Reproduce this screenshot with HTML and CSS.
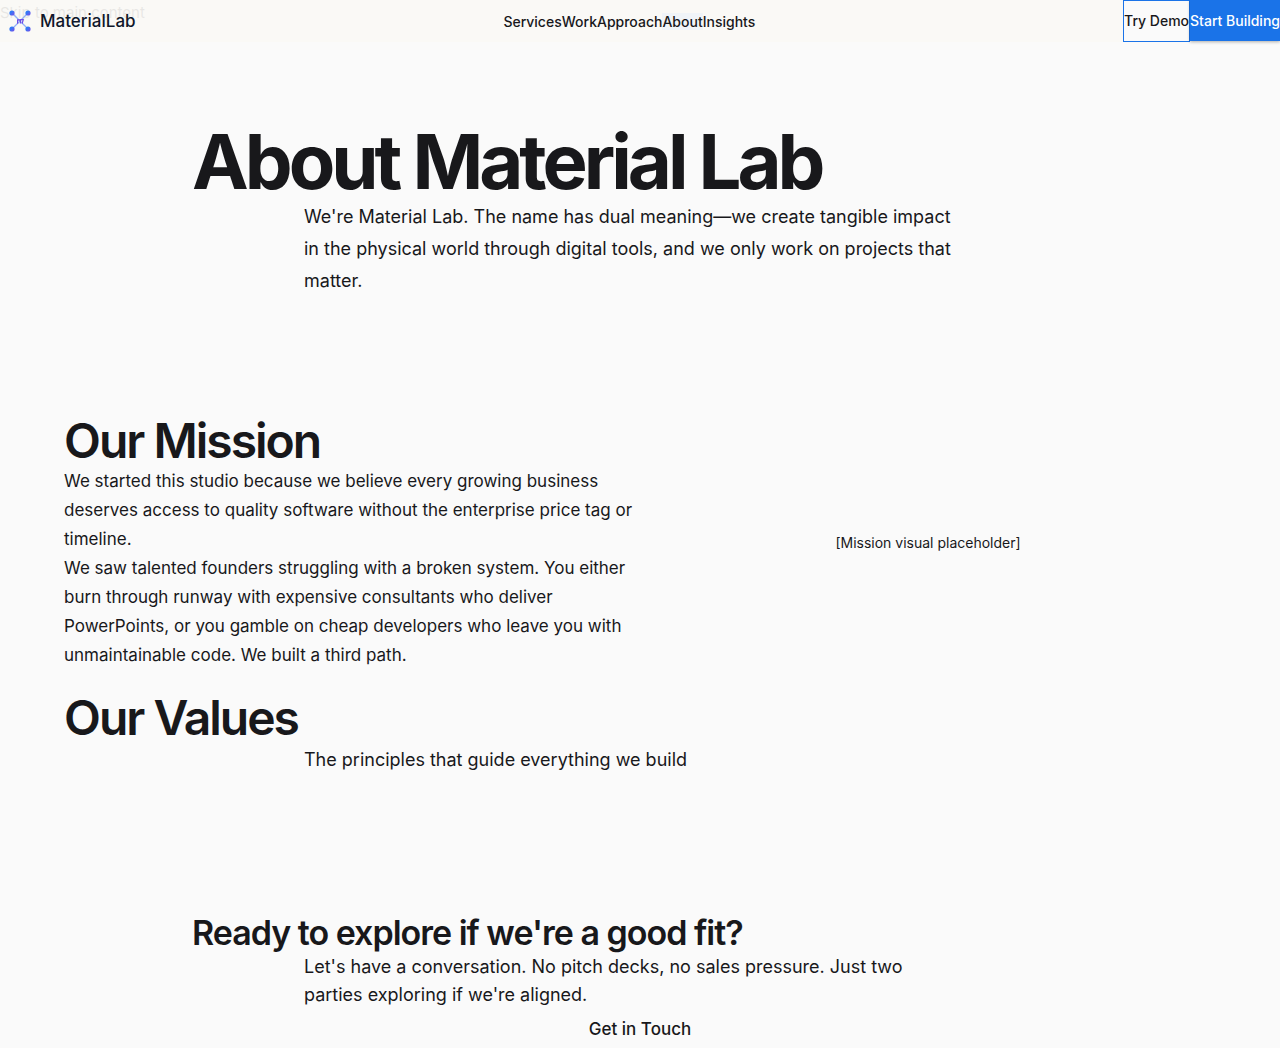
FILE: index.html
```html
<!DOCTYPE html>
<html lang="en">
<head>
<meta charset="utf-8">
<meta name="viewport" content="width=device-width, initial-scale=1">
<title>About | MaterialLab</title>
<link rel="stylesheet" href="styles.css">
</head>
<body>
<a class="skip-link" href="#main">Skip to main content</a>
<header class="site-header">
  <a class="brand" href="#">
    <svg class="brand-mark" viewBox="0 0 32 32" aria-hidden="true">
      <defs>
        <linearGradient id="mark" x1="0" y1="0" x2="1" y2="1">
          <stop offset="0.3" stop-color="#2f7bf6"/>
          <stop offset="1" stop-color="#7c4be8"/>
        </linearGradient>
      </defs>
      <path d="M8 8l16 16M24 8L8 24" stroke="#8fb0f8" stroke-width="1.2"/>
      <path d="M13.6 18.8v-4h2.8v3.6M16.4 14.6h2.8l-1 4" fill="none" stroke="#6d4be8" stroke-width="1.2"/>
      <g fill="url(#mark)">
        <circle cx="8" cy="8" r="2.6"/>
        <circle cx="24" cy="8" r="2.6"/>
        <circle cx="8" cy="24" r="2.6"/>
        <circle cx="24" cy="24" r="2.6"/>
      </g>
    </svg>
    <span class="brand-name">MaterialLab</span>
  </a>
  <nav class="nav" aria-label="Main">
    <a href="#">Services</a><a href="#">Work</a><a href="#">Approach</a><a class="active" href="#" aria-current="page">About</a><a href="#">Insights</a>
  </nav>
  <div class="actions">
    <button class="btn btn-outline" type="button">Try Demo</button>
    <button class="btn btn-solid" type="button">Start Building</button>
  </div>
</header>
<main id="main">
  <section class="hero narrow">
    <h1>About Material Lab</h1>
    <p class="lead">We're Material Lab. The name has dual meaning—we create tangible impact in the physical world through digital tools, and we only work on projects that matter.</p>
  </section>
  <section class="mission wide">
    <div>
      <h2>Our Mission</h2>
      <p>We started this studio because we believe every growing business deserves access to quality software without the enterprise price tag or timeline.</p>
      <p>We saw talented founders struggling with a broken system. You either burn through runway with expensive consultants who deliver PowerPoints, or you gamble on cheap developers who leave you with unmaintainable code. We built a third path.</p>
    </div>
    <div class="visual">[Mission visual placeholder]</div>
  </section>
  <section class="values wide">
    <h2>Our Values</h2>
    <p class="lead">The principles that guide everything we build</p>
  </section>
  <section class="cta narrow">
    <h2>Ready to explore if we're a good fit?</h2>
    <p class="lead">Let's have a conversation. No pitch decks, no sales pressure. Just two parties exploring if we're aligned.</p>
    <a class="touch" href="#">Get in Touch</a>
  </section>
</main>
</body>
</html>
```

FILE: styles.css
```css
* { box-sizing: border-box; margin: 0; padding: 0; }

body {
  background: #fafafa;
  color: #18181b;
  font-family: Inter, "Liberation Sans", sans-serif;
  font-size: 14px;
  line-height: 24px;
}

a { color: inherit; text-decoration: none; }

.skip-link {
  position: absolute;
  top: 0;
  left: 0;
  font-size: 15px;
  line-height: 26px;
}

.site-header {
  position: relative;
  display: flex;
  justify-content: space-between;
  align-items: center;
  height: 42px;
  background: rgba(250, 249, 245, 0.92);
}

.brand { display: flex; align-items: center; padding-left: 4px; gap: 4px; }
.brand-mark { width: 32px; height: 32px; }
.brand-name { font-size: 17px; font-weight: 500; line-height: 26px; color: #0f172a; }

.nav { display: flex; font-weight: 500; line-height: 17px; }
.nav .active { background: #f0f4f8; }

.actions { display: flex; }
.btn {
  height: 42px;
  border: 1px solid #1a73e8;
  font: inherit;
  font-weight: 500;
  white-space: nowrap;
}
.btn-outline { background: #fafafa; color: #18181b; }
.btn-solid {
  height: 41px;
  border-width: 0;
  background: #1a73e8;
  color: #fff;
  box-shadow: 0 1px 3px rgba(0, 0, 0, 0.3);
}

.narrow { max-width: 896px; margin: 0 auto; }
.wide { max-width: 1152px; margin: 0 auto; }

.lead {
  max-width: 672px;
  margin: 0 auto;
  padding-right: 16px;
  font-size: 18px;
  line-height: 32px;
}

.hero { padding: 79px 0 118px; }
h1 { font-size: 76px; line-height: 80px; font-weight: 700; letter-spacing: -4px; }
h2 { font-size: 48px; line-height: 52px; font-weight: 600; letter-spacing: -2px; }

.mission {
  display: grid;
  grid-template-columns: 1fr 1fr;
  font-size: 17px;
  line-height: 29px;
}
.visual {
  display: flex;
  align-items: center;
  justify-content: center;
  font-size: 14px;
}

.values { padding: 22px 0 137px; }

.cta h2 { font-size: 34px; line-height: 40px; letter-spacing: -1px; }
.cta .lead { line-height: 28px; }
.touch {
  display: block;
  font-size: 17px;
  line-height: 40px;
  font-weight: 500;
  text-align: center;
}
```
